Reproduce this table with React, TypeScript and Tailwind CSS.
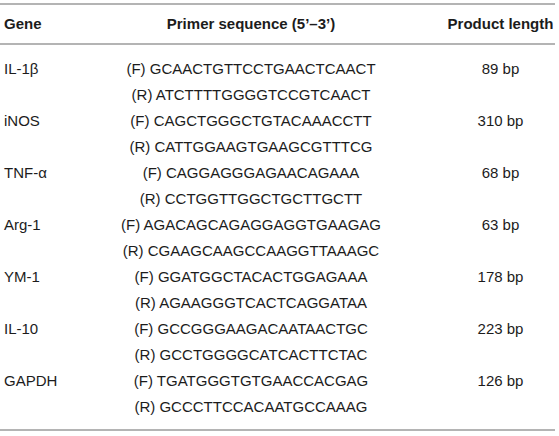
import React from "react";

const rows: { gene: string; f: string; r: string; len: string }[] = [
  { gene: "IL-1β", f: "GCAACTGTTCCTGAACTCAACT", r: "ATCTTTTGGGGTCCGTCAACT", len: "89 bp" },
  { gene: "iNOS", f: "CAGCTGGGCTGTACAAACCTT", r: "CATTGGAAGTGAAGCGTTTCG", len: "310 bp" },
  { gene: "TNF-α", f: "CAGGAGGGAGAACAGAAA", r: "CCTGGTTGGCTGCTTGCTT", len: "68 bp" },
  { gene: "Arg-1", f: "AGACAGCAGAGGAGGTGAAGAG", r: "CGAAGCAAGCCAAGGTTAAAGC", len: "63 bp" },
  { gene: "YM-1", f: "GGATGGCTACACTGGAGAAA", r: "AGAAGGGTCACTCAGGATAA", len: "178 bp" },
  { gene: "IL-10", f: "GCCGGGAAGACAATAACTGC", r: "GCCTGGGGCATCACTTCTAC", len: "223 bp" },
  { gene: "GAPDH", f: "TGATGGGTGTGAACCACGAG", r: "GCCCTTCCACAATGCCAAAG", len: "126 bp" },
];

export default function App() {
  return (
    <div
      className="w-[559px] h-[436px] bg-white text-[#1c1c1c] pt-[3px]"
      style={{ fontFamily: '"Liberation Sans", Arial, sans-serif' }}
    >
      <div className="w-[555px]">
        <div className="h-[2px] bg-[#b4b4b4]" />
        <div className="flex h-[38px] items-center text-[15px] font-bold">
          <div className="w-[120px] pl-[4px]">Gene</div>
          <div className="w-[262px] text-center">Primer sequence (5’–3’)</div>
          <div className="w-[64px]" />
          <div className="w-[109px] text-center whitespace-nowrap">Product length</div>
        </div>
        <div className="h-[2px] bg-[#b4b4b4]" />
        <div className="pt-[11px] pb-[9px] text-[15px] leading-[26px]">
          {rows.map((row) => (
            <React.Fragment key={row.gene}>
              <div className="flex h-[26px]">
                <div className="w-[120px] pl-[4px]">{row.gene}</div>
                <div className="w-[262px] text-center whitespace-nowrap">(F) {row.f}</div>
                <div className="w-[64px]" />
                <div className="w-[109px] text-center">{row.len}</div>
              </div>
              <div className="flex h-[26px]">
                <div className="w-[120px] pl-[4px]" />
                <div className="w-[262px] text-center whitespace-nowrap">(R) {row.r}</div>
                <div className="w-[64px]" />
                <div className="w-[109px]" />
              </div>
            </React.Fragment>
          ))}
        </div>
        <div className="h-[2px] bg-[#b4b4b4]" />
      </div>
    </div>
  );
}
